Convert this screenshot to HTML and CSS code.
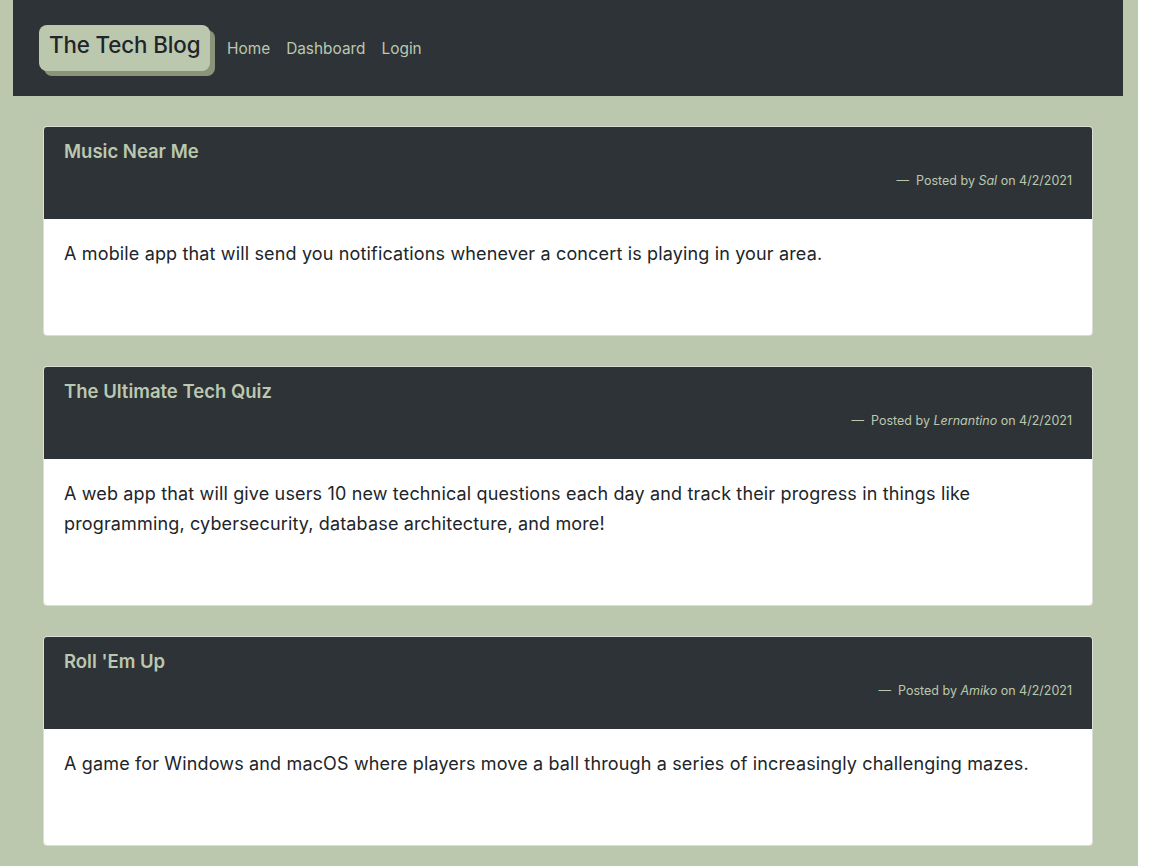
FILE: index.html
```html
<!DOCTYPE html>
<html lang="en">
<head>
<meta charset="utf-8">
<title>The Tech Blog</title>
<link rel="stylesheet" href="styles.css">
</head>
<body>
<div class="page">
  <header class="topbar">
    <a class="logo" href="#">The Tech Blog</a>
    <nav class="nav">
      <a href="#">Home</a>
      <a href="#">Dashboard</a>
      <a href="#">Login</a>
    </nav>
  </header>
  <main class="posts">
    <article class="card">
      <div class="card-head">
        <h2 class="card-title">Music Near Me</h2>
        <div class="meta">—&nbsp; Posted by <em>Sal</em> on 4/2/2021</div>
      </div>
      <div class="card-body">
        <p>A mobile app that will send you notifications whenever a concert is playing in your area.</p>
      </div>
    </article>
    <article class="card">
      <div class="card-head">
        <h2 class="card-title">The Ultimate Tech Quiz</h2>
        <div class="meta">—&nbsp; Posted by <em>Lernantino</em> on 4/2/2021</div>
      </div>
      <div class="card-body">
        <p>A web app that will give users 10 new technical questions each day and track their progress in things like programming, cybersecurity, database architecture, and more!</p>
      </div>
    </article>
    <article class="card">
      <div class="card-head">
        <h2 class="card-title">Roll 'Em Up</h2>
        <div class="meta">—&nbsp; Posted by <em>Amiko</em> on 4/2/2021</div>
      </div>
      <div class="card-body">
        <p>A game for Windows and macOS where players move a ball through a series of increasingly challenging mazes.</p>
      </div>
    </article>
  </main>
</div>
</body>
</html>
```

FILE: styles.css
```css
html, body {
  margin: 0;
  padding: 0;
  background: #ffffff;
}
body {
  font-family: Inter, "Noto Sans", "Liberation Sans", sans-serif;
  color: #212529;
}
.page {
  width: 1138px;
  min-height: 866px;
  background: #bbc8ae;
  padding: 0 15px 0 13px;
  box-sizing: border-box;
}
.topbar {
  height: 96px;
  background: #2e3338;
  display: flex;
  align-items: center;
  padding-left: 26px;
}
.logo {
  display: block;
  height: 46px;
  line-height: 40px;
  padding: 0 0 0 10px;
  width: 171px;
  box-sizing: border-box;
  white-space: nowrap;
  background: #bbc8ae;
  color: #212529;
  font-size: 22.3px;
  font-weight: 500;
  letter-spacing: -0.1px;
  text-decoration: none;
  border-radius: 8px;
  box-shadow: 5px 5px 0 #8a9479;
}
.nav {
  display: flex;
  gap: 16px;
  margin-left: 17px;
  padding-top: 0;
}
.nav a {
  color: #bbc8ae;
  text-decoration: none;
  font-size: 15.4px;
}
.posts {
  padding: 30px 30px 20px 30px;
  display: flex;
  flex-direction: column;
  gap: 30px;
}
.card {
  background: #fff;
  border: 1px solid #d9ddd6;
  border-radius: 4px;
  overflow: hidden;
}
.card-head {
  background: #2e3338;
  padding: 12px 20px 28px;
}
.card-title {
  margin: 0 0 8px;
  font-size: 18.5px;
  line-height: 24px;
  font-weight: 600;
  color: #bbc8ae;
}
.meta {
  text-align: right;
  font-size: 12.5px;
  line-height: 20px;
  color: #bbc8ae;
}
.card-body {
  padding: 20px 20px 66px;
}
.card-body p {
  margin: 0;
  font-size: 18px;
  line-height: 30px;
  letter-spacing: 0.15px;
  color: #212529;
}
```
